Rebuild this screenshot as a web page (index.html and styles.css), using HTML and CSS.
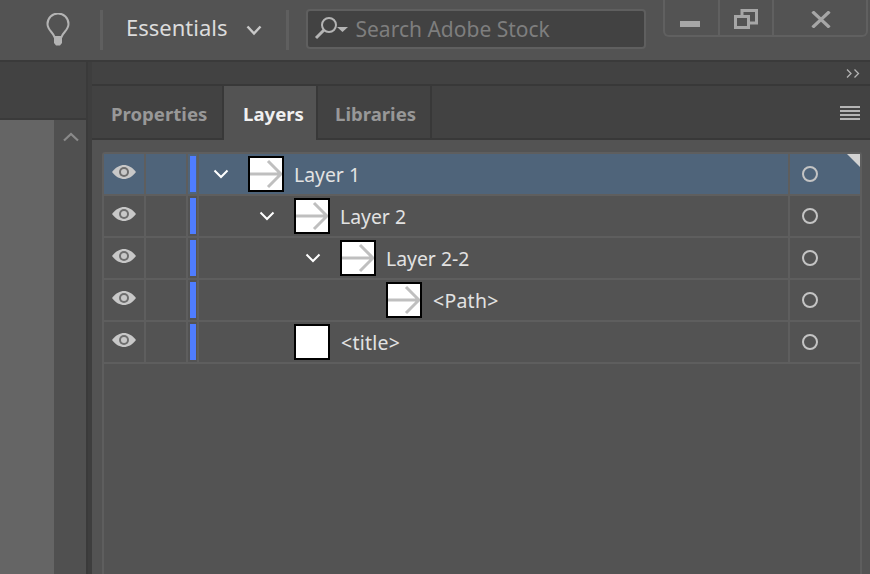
FILE: index.html
```html
<!DOCTYPE html>
<html lang="en">
<head>
  <meta charset="UTF-8">
  <title>Layers</title>
  <link rel="stylesheet" href="styles.css">
</head>
<body>
  <svg class="defs" width="0" height="0">
    <defs>
      <symbol id="eye" viewBox="0 0 24 14">
        <path d="M0 7C4 2 8 0 12 0s8 2 12 7C20 12 16 14 12 14S4 12 0 7z" fill="#c8c8c8"/>
        <circle cx="12" cy="7" r="5" fill="#6e6e6e"/>
        <circle cx="12" cy="7" r="3" fill="#c8c8c8"/>
      </symbol>
      <symbol id="arrow" viewBox="0 0 32 32">
        <path d="M0 16H31M18 3l13 13-13 13" fill="none" stroke="#bfbfbf" stroke-width="3"/>
      </symbol>
      <symbol id="chev" viewBox="0 0 16 10">
        <path d="M1.5 1.5L8 8l6.5-6.5" fill="none" stroke="#fff" stroke-width="2"/>
      </symbol>
    </defs>
  </svg>

  <header class="topbar">
    <svg class="bulb" width="24" height="34" viewBox="0 0 24 34">
      <path d="M8.5 24C7 19 1.5 17 1.5 11a10.5 10.5 0 0 1 21 0c0 6-5.5 8-7 13z" fill="none" stroke="#b4b4b4" stroke-width="2"/>
      <path d="M8 23h8v7l-2 2.5h-4L8 30z" fill="#b4b4b4"/>
    </svg>
    <span class="vsep first"></span>
    <span class="workspace">Essentials</span>
    <svg class="ws-chev" width="16" height="11" viewBox="0 0 16 11">
      <path d="M1.5 1.5L8 8.5l6.5-7" fill="none" stroke="#c8c8c8" stroke-width="2.5"/>
    </svg>
    <span class="vsep"></span>
    <div class="search">
      <svg width="36" height="26" viewBox="0 0 36 26">
        <circle cx="15" cy="9" r="7" fill="none" stroke="#b4b4b4" stroke-width="2"/>
        <path d="M10 14L2 22" stroke="#b4b4b4" stroke-width="3"/>
        <path d="M23 11h11l-5.5 5z" fill="#b4b4b4"/>
      </svg>
      <span class="search-text">Search Adobe Stock</span>
    </div>
    <div class="winbtns">
      <div class="winbtn min"><span class="minbar"></span></div>
      <div class="winbtn restore">
        <svg width="24" height="20" viewBox="0 0 24 20">
          <path d="M8 6V1.5h14.500V14H16" fill="none" stroke="#a6a6a6" stroke-width="3"/>
          <rect x="1.5" y="7.5" width="13" height="11" fill="none" stroke="#a6a6a6" stroke-width="3"/>
        </svg>
      </div>
      <div class="winbtn close">
        <svg width="20" height="17" viewBox="0 0 20 17">
          <path d="M1.5 0.5L18.5 16.5M18.5 0.5L1.5 16.5" stroke="#a6a6a6" stroke-width="3.2"/>
        </svg>
      </div>
    </div>
  </header>

  <div class="main">
    <aside class="leftside">
      <div class="left-head"></div>
      <div class="left-body">
        <div class="canvas"></div>
        <div class="scroll">
          <svg width="16" height="10" viewBox="0 0 16 10">
            <path d="M1 8.500L8 2l7 6.500" fill="none" stroke="#8a8a8a" stroke-width="2.200"/>
          </svg>
        </div>
      </div>
    </aside>

    <section class="panel">
      <div class="collapse">
        <svg width="14" height="9" viewBox="0 0 14 9">
          <path d="M1 0.500L5 4.500L1 8.500M8.500 0.500L12.500 4.500L8.500 8.500" fill="none" stroke="#b4b4b4" stroke-width="1.300"/>
        </svg>
      </div>
      <div class="tabs">
        <div class="tab tab-props">Properties</div>
        <div class="tab tab-layers active">Layers</div>
        <div class="tab tab-libs">Libraries</div>
        <div class="tabs-fill">
          <span class="menu"><i></i><i></i><i></i><i></i></span>
        </div>
      </div>
      <div class="panel-body">
        <div class="list">
          <div class="row selected">
            <div class="cell eye"><svg width="24" height="14"><use href="#eye"/></svg></div>
            <div class="cell lock"></div>
            <div class="cell color"><span class="bar"></span></div>
            <div class="cell name lvl0">
              <span class="toggle"><svg width="16" height="10"><use href="#chev"/></svg></span>
              <span class="thumb"><svg width="32" height="32"><use href="#arrow"/></svg></span>
              <span class="label">Layer 1</span>
            </div>
            <div class="cell target"><span class="ring"></span><span class="corner"></span></div>
          </div>
          <div class="row">
            <div class="cell eye"><svg width="24" height="14"><use href="#eye"/></svg></div>
            <div class="cell lock"></div>
            <div class="cell color"><span class="bar"></span></div>
            <div class="cell name lvl1">
              <span class="toggle"><svg width="16" height="10"><use href="#chev"/></svg></span>
              <span class="thumb"><svg width="32" height="32"><use href="#arrow"/></svg></span>
              <span class="label">Layer 2</span>
            </div>
            <div class="cell target"><span class="ring"></span></div>
          </div>
          <div class="row">
            <div class="cell eye"><svg width="24" height="14"><use href="#eye"/></svg></div>
            <div class="cell lock"></div>
            <div class="cell color"><span class="bar"></span></div>
            <div class="cell name lvl2">
              <span class="toggle"><svg width="16" height="10"><use href="#chev"/></svg></span>
              <span class="thumb"><svg width="32" height="32"><use href="#arrow"/></svg></span>
              <span class="label">Layer 2-2</span>
            </div>
            <div class="cell target"><span class="ring"></span></div>
          </div>
          <div class="row">
            <div class="cell eye"><svg width="24" height="14"><use href="#eye"/></svg></div>
            <div class="cell lock"></div>
            <div class="cell color"><span class="bar"></span></div>
            <div class="cell name lvl3">
              <span class="toggle"></span>
              <span class="thumb"><svg width="32" height="32"><use href="#arrow"/></svg></span>
              <span class="label tag">&lt;Path&gt;</span>
            </div>
            <div class="cell target"><span class="ring"></span></div>
          </div>
          <div class="row">
            <div class="cell eye"><svg width="24" height="14"><use href="#eye"/></svg></div>
            <div class="cell lock"></div>
            <div class="cell color"><span class="bar"></span></div>
            <div class="cell name lvl1">
              <span class="toggle"></span>
              <span class="thumb"></span>
              <span class="label tag">&lt;title&gt;</span>
            </div>
            <div class="cell target"><span class="ring"></span></div>
          </div>
        </div>
      </div>
    </section>
  </div>
</body>
</html>
```

FILE: styles.css
```css
html, body { margin: 0; height: 100%; overflow: hidden; }
body { font-family: "Noto Sans", "Open Sans", sans-serif; background: #535353; color: #e6e6e6; display: flex; flex-direction: column; }
.defs { position: absolute; }

/* top bar */
.topbar { height: 60px; flex: none; display: flex; align-items: flex-start; background: #535353; box-sizing: border-box; }
.bulb { margin: 13px 0 0 46px; }
.vsep { width: 3px; height: 40px; margin-top: 10px; background: #5f5f5f; flex: none; }
.vsep.first { margin-left: 30px; }
.workspace { margin: 11px 0 0 23px; font-size: 22px; line-height: 32px; color: #dcdcdc; }
.ws-chev { margin: 25px 24px 0 18px; }
.search { width: 340px; height: 40px; margin: 9px 0 0 17px; box-sizing: border-box; border: 2px solid #5f5f5f; border-radius: 4px; background: #424242; display: flex; align-items: center; padding-left: 6px; flex: none; }
.search-text { margin-left: 6px; font-size: 21px; color: #7e7e7e; }
.winbtns { display: flex; height: 37px; margin-left: 17px; box-sizing: border-box; border: 2px solid #606060; border-top: 0; border-radius: 0 0 6px 6px; flex: none; }
.winbtn { display: flex; align-items: center; justify-content: center; box-sizing: border-box; height: 35px; }
.min { width: 55px; border-right: 2px solid #606060; padding-right: 2px; }
.restore { width: 54px; border-right: 2px solid #606060; }
.close { width: 92px; padding-left: 2px; }
.minbar { width: 20px; height: 6px; margin-top: 13px; background: #a6a6a6; }
.restore svg { margin-top: 2px; }
.close svg { margin-top: 3px; }

/* main area */
.main { flex: 1; display: flex; border-top: 2px solid #3a3a3a; min-height: 0; }
.leftside { width: 86px; flex: none; display: flex; flex-direction: column; border-right: 2px solid #3a3a3a; }
.left-head { height: 56px; background: #424242; border-bottom: 2px solid #3a3a3a; flex: none; }
.left-body { flex: 1; display: flex; }
.canvas { width: 54px; background: #656565; }
.scroll { flex: 1; background: #505050; display: flex; justify-content: center; align-items: flex-start; padding: 12px 0 0 2px; }
.panel { flex: 1; display: flex; flex-direction: column; min-width: 0; border-left: 4px solid #3e3e3e; }

.collapse { height: 22px; flex: none; background: #424242; border-bottom: 2px solid #383838; display: flex; justify-content: flex-end; align-items: center; padding-right: 10px; }
.tabs { height: 52px; flex: none; background: #424242; border-bottom: 2px solid #383838; display: flex; }
.tab { display: flex; align-items: center; padding-top: 2px; box-sizing: border-box; font-size: 18.6px; font-weight: 700; color: #989898; border-right: 2px solid #383838; }
.tab-props { width: 132px; padding-left: 19px; }
.tab-layers { width: 94px; padding-left: 19px; }
.tab-libs { width: 114px; padding-left: 17px; }
.tab.active { background: #535353; color: #f0f0f0; margin-bottom: -2px; padding-top: 0; }
.tabs-fill { flex: 1; display: flex; justify-content: flex-end; align-items: center; padding: 2px 10px 0 0; }
.menu { display: flex; flex-direction: column; gap: 2px; width: 20px; }
.menu i { display: block; height: 2px; background: #b4b4b4; }

/* layers list */
.panel-body { flex: 1; background: #535353; padding: 12px 8px 0 10px; min-height: 0; }
.list { height: 100%; border: 2px solid #5e5e5e; border-bottom: 0; border-radius: 3px 3px 0 0; }
.row { height: 42px; box-sizing: border-box; display: flex; border-bottom: 2px solid #5e5e5e; }
.row.selected { background: #4f647a; }
.cell { display: flex; align-items: center; box-sizing: border-box; height: 40px; flex: none; position: relative; }
.eye { width: 42px; justify-content: center; border-right: 2px solid #5e5e5e; padding-bottom: 4px; }
.lock { width: 42px; border-right: 2px solid #5e5e5e; }
.color { width: 11px; padding-left: 2px; border-right: 2px solid #5e5e5e; }
.bar { width: 6px; height: 36px; background: #4f7dff; }
.name { flex: 1; min-width: 0; }
.lvl0 { padding-left: 4px; }
.lvl1 { padding-left: 50px; }
.lvl2 { padding-left: 96px; }
.lvl3 { padding-left: 142px; }
.toggle { width: 36px; margin-right: 9px; flex: none; display: flex; justify-content: center; }
.thumb { width: 36px; height: 36px; box-sizing: border-box; border: 2px solid #000; background: #fff; flex: none; display: block; }
.thumb svg { display: block; }
.label { margin-left: 10px; font-size: 19.4px; color: #e2e2e2; white-space: nowrap; }
.label.tag { margin-left: 11px; letter-spacing: 0.3px; }
.target { width: 72px; border-left: 2px solid #5e5e5e; padding-left: 12px; }
.ring { width: 16px; height: 16px; box-sizing: border-box; border: 2px solid #c4c4c4; border-radius: 50%; display: block; }
.corner { position: absolute; top: 0; right: 0; width: 0; height: 0; border-top: 13px solid #d2d2d2; border-left: 13px solid transparent; }
```
